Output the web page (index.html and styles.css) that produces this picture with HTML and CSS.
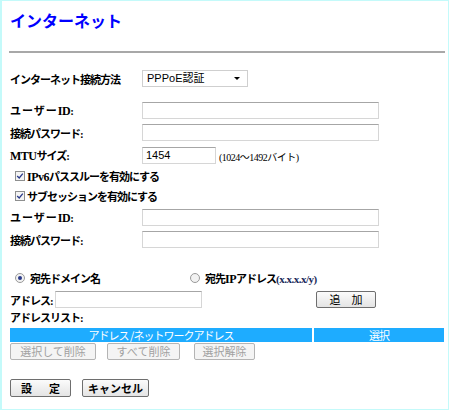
FILE: index.html
```html
<!DOCTYPE html>
<html lang="ja">
<head>
<meta charset="utf-8">
<link rel="stylesheet" href="styles.css">
</head>
<body>
<div class="page">
  <h1 class="title">インターネット</h1>
  <div class="rule"></div>

  <div class="row method">
    <span class="label">インターネット接続方法</span>
    <div class="select">PPPoE認証<span class="arrow"></span></div>
  </div>

  <div class="row field first">
    <span class="label"><span class="wide-kana">ユーザー</span><span class="lat">ID</span>:</span>
    <div class="input wide"></div>
  </div>
  <div class="row field">
    <span class="label">接続パスワード:</span>
    <div class="input wide"></div>
  </div>
  <div class="row field">
    <span class="label"><span class="lat">MTU</span>サイズ:</span>
    <div class="mtu"><div class="input short">1454</div><span class="hint">(1024〜1492バイト)</span></div>
  </div>

  <div class="check-row first"><span class="checkbox"><svg viewBox="0 0 10 10" width="8" height="8"><path d="M1.5 5 L4 7.5 L8.5 2" fill="none" stroke="#2a3a8a" stroke-width="1.6"/></svg></span><span class="label"><span class="lat">IPv6</span>パススルーを有効にする</span></div>
  <div class="check-row"><span class="checkbox"><svg viewBox="0 0 10 10" width="8" height="8"><path d="M1.5 5 L4 7.5 L8.5 2" fill="none" stroke="#2a3a8a" stroke-width="1.6"/></svg></span><span class="label">サブセッションを有効にする</span></div>

  <div class="row field sub">
    <span class="label"><span class="wide-kana">ユーザー</span><span class="lat">ID</span>:</span>
    <div class="input wide"></div>
  </div>
  <div class="row field">
    <span class="label">接続パスワード:</span>
    <div class="input wide"></div>
  </div>

  <div class="radio-row">
    <div class="radio-item dom"><span class="radio on"></span><span class="label">宛先ドメイン名</span></div>
    <div class="radio-item"><span class="radio"></span><span class="label">宛先<span class="lat">IP</span>アドレス<span class="fmt">(x.x.x.x/y)</span></span></div>
  </div>

  <div class="addr-row">
    <span class="label">アドレス:</span>
    <div class="input addr"></div>
    <button class="btn add">追　加</button>
  </div>

  <div class="list-label label">アドレスリスト:</div>
  <div class="table-head">
    <div class="th main">アドレス /ネットワークアドレス</div>
    <div class="th sel">選択</div>
  </div>
  <div class="list-btns">
    <button class="btn dis b1">選択して削除</button>
    <button class="btn dis b2">すべて削除</button>
    <button class="btn dis b3">選択解除</button>
  </div>

  <div class="foot-btns">
    <button class="btn strong f1"><span class="spaced">設　定</span></button>
    <button class="btn strong f2">キャンセル</button>
  </div>
</div>
</body>
</html>
```
FILE: styles.css
```css
html, body {
  margin: 0;
  padding: 0;
  background: #ffffff;
}
.page {
  box-sizing: border-box;
  width: 449px;
  height: 410px;
  border: 1px solid #c4fafa;
  border-left-width: 2px;
  padding: 0 0 0 8px;
  font-family: "Liberation Serif", "Noto Sans CJK JP", serif;
  font-size: 11px;
  color: #000;
}
.title {
  margin: 8px 0 0 0;
  height: 22px;
  line-height: 22px;
  font-family: "Noto Sans CJK JP", sans-serif;
  font-size: 16px;
  font-weight: bold;
  color: #0000ff;
  letter-spacing: 0;
}
.rule {
  margin: 20px 0 0 -1px;
  width: 436px;
  height: 2px;
  background: #a8a8a8;
}
.label {
  font-weight: bold;
  letter-spacing: -1px;
  white-space: nowrap;
}
.lat {
  font-size: 12px;
  letter-spacing: -0.5px;
}
.wide-kana {
  letter-spacing: 1px;
}
.row {
  display: grid;
  grid-template-columns: 132px auto;
  align-items: center;
  height: 17px;
}
.method { margin-top: 17px; }
.field { margin-top: 5px; }
.field.first { margin-top: 15px; }
.field.sub { margin-top: 3px; }
.select {
  position: relative;
  box-sizing: border-box;
  width: 106px;
  height: 17px;
  border: 1px solid #cfcfcf;
  padding-left: 4px;
  font-family: "Liberation Sans", "Noto Sans CJK JP", sans-serif;
  font-size: 11px;
  line-height: 15px;
}
.arrow {
  position: absolute;
  right: 7px;
  top: 6px;
  width: 0;
  height: 0;
  border-left: 3px solid transparent;
  border-right: 3px solid transparent;
  border-top: 3px solid #000;
}
.input {
  box-sizing: border-box;
  height: 17px;
  border: 1px solid #d6d6d6;
  border-top-color: #a6a6a6;
  background: #fff;
  font-family: "Liberation Sans", sans-serif;
  font-size: 11px;
  line-height: 15px;
  padding-left: 3px;
}
.wide { width: 237px; }
.short { width: 74px; }
.mtu {
  display: flex;
  align-items: center;
  gap: 3px;
}
.hint {
  font-size: 10px;
  letter-spacing: -0.5px;
  padding-top: 3px;
}
.check-row {
  display: flex;
  align-items: center;
  height: 20px;
  padding-left: 5px;
  gap: 2px;
}
.check-row.first { margin-top: 3px; }
.checkbox {
  box-sizing: border-box;
  width: 10px;
  height: 10px;
  border: 1px solid #8e8f8f;
  background: #f4f4f4;
  display: flex;
  align-items: center;
  justify-content: center;
}
.radio-row {
  display: flex;
  align-items: center;
  height: 18px;
  margin-top: 21px;
  padding-left: 5px;
}
.radio-item {
  display: flex;
  align-items: center;
  gap: 5px;
}
.radio-item.dom { width: 175px; }
.radio {
  box-sizing: border-box;
  width: 10px;
  height: 10px;
  border-radius: 50%;
  border: 1px solid #9a9a9a;
  background: #f2f2f2;
  display: flex;
  align-items: center;
  justify-content: center;
}
.radio.on::after {
  content: "";
  width: 4px;
  height: 4px;
  border-radius: 50%;
  background: #2a3a8a;
}
.fmt {
  color: #1a2a5a;
  letter-spacing: -0.5px;
}
.addr-row {
  display: flex;
  align-items: center;
  height: 17px;
  margin-top: 4px;
}
.addr-row .label { width: 45px; }
.addr { width: 147px; }
.btn {
  box-sizing: border-box;
  height: 17px;
  padding: 0;
  border: 1px solid #6e6e6e;
  border-radius: 2px;
  background: linear-gradient(#fbfbfb, #e4e4e4);
  font-family: "Noto Sans CJK JP", sans-serif;
  font-size: 11px;
  line-height: 15px;
  color: #000;
}
.add { width: 60px; margin-left: 114px; }
.list-label {
  margin-top: 2px;
  height: 16px;
  line-height: 16px;
}
.table-head {
  display: flex;
  margin-top: 2px;
  width: 434px;
  height: 14px;
  gap: 2px;
}
.th {
  background: #1eacff;
  color: #fff;
  font-family: "Noto Sans CJK JP", sans-serif;
  font-size: 11px;
  line-height: 14px;
  letter-spacing: -1px;
  text-align: center;
}
.th.main { width: 302px; }
.th.sel { flex: 1; }
.list-btns {
  display: flex;
  margin-top: 1px;
  height: 17px;
}
.btn.dis {
  border-color: #b4b4b4;
  background: #f4f4f4;
  color: #a0a0a0;
}
.b1 { width: 86px; }
.b2 { width: 73px; margin-left: 11px; }
.b3 { width: 61px; margin-left: 14px; }
.foot-btns {
  display: flex;
  margin-top: 19px;
  height: 18px;
}
.btn.strong {
  height: 18px;
  font-weight: bold;
}
.spaced {
  letter-spacing: 3px;
  margin-right: -3px;
}
.f1 { width: 61px; }
.f2 { width: 67px; margin-left: 11px; }
```
